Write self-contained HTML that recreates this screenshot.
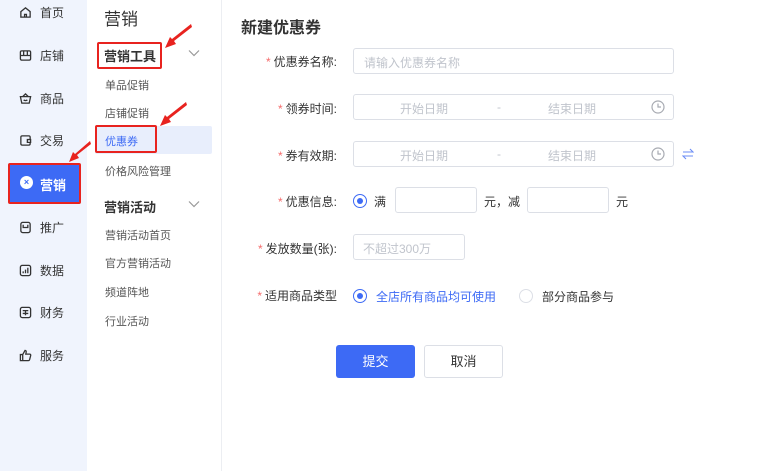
<!DOCTYPE html>
<html><head><meta charset="utf-8"><style>
*{margin:0;padding:0;box-sizing:border-box}
body{width:782px;height:471px;overflow:hidden;background:#fff;font-family:"Liberation Sans","Noto Sans CJK SC",sans-serif;position:relative;color:#333}
.a{position:absolute;white-space:nowrap}
#nav{position:absolute;left:0;top:0;width:87px;height:471px;background:#f0f4fd}
#sub{position:absolute;left:87px;top:0;width:135px;height:471px;background:#fff;border-right:1px solid #eceef2}
.ni{position:absolute;left:19px;font-size:12px;color:#333;display:flex;align-items:center;gap:8px}
.ni svg{width:13px;height:13px}
.si{position:absolute;left:105px;font-size:11px;color:#555}
.lab{position:absolute;font-size:12px;color:#333;text-align:right;right:445px}
.lab b{color:#f56c6c;font-weight:normal;margin-right:3px}
.inp{position:absolute;border:1px solid #dcdfe6;border-radius:3px;background:#fff;font-size:12px;color:#c0c4cc}
.ph{position:absolute;font-size:12px;color:#c0c4cc}
.radio{position:absolute;width:14px;height:14px;border-radius:50%;border:1px solid #3d6af5}
.radio.on::after{content:"";position:absolute;left:3px;top:3px;width:6px;height:6px;border-radius:50%;background:#3d6af5}
</style></head><body>
<div id="nav">
<div class="ni" style="top:4px"><svg viewBox="0 0 14 14" fill="none" stroke="#333" stroke-width="1.4"><path d="M2 6L7 2l5 4v6H2z"/><path d="M6 12V9h2v3"/></svg>首页</div>
<div class="ni" style="top:47px"><svg viewBox="0 0 14 14" fill="none" stroke="#333" stroke-width="1.4"><rect x="1.5" y="2" width="11" height="10" rx="1.5"/><path d="M5 2v5M9 2v5M1.5 7h11"/></svg>店铺</div>
<div class="ni" style="top:90px"><svg viewBox="0 0 14 14" fill="none" stroke="#333" stroke-width="1.4"><path d="M1.5 5h11l-1.5 7H3z"/><path d="M4 5l3-3 3 3M5 8.5c1 1 3 1 4 0"/></svg>商品</div>
<div class="ni" style="top:132px"><svg viewBox="0 0 14 14" fill="none" stroke="#333" stroke-width="1.4"><path d="M12 6V3.5A1.5 1.5 0 0 0 10.5 2h-7A1.5 1.5 0 0 0 2 3.5v7A1.5 1.5 0 0 0 3.5 12h7a1.5 1.5 0 0 0 1.5-1.5V9"/><path d="M9 6h3.5v3H9z"/></svg>交易</div>
<div class="a" style="left:8px;top:163px;width:73px;height:41px;background:#3d6af5;border:2px solid #e8231f;border-radius:2px"></div>
<div class="a" style="left:20px;top:176px;width:13px;height:13px;border-radius:50%;background:#fff;color:#3d6af5;font-size:9px;line-height:13px;text-align:center;font-weight:bold">×</div>
<div class="a" style="left:40px;top:175px;font-size:13px;color:#fff;font-weight:bold">营销</div>
<div class="ni" style="top:219px"><svg viewBox="0 0 14 14" fill="none" stroke="#333" stroke-width="1.4"><rect x="2" y="1.5" width="10" height="11" rx="2"/><path d="M4.5 4v3h5V4"/></svg>推广</div>
<div class="ni" style="top:262px"><svg viewBox="0 0 14 14" fill="none" stroke="#333" stroke-width="1.4"><rect x="1.5" y="1.5" width="11" height="11" rx="2"/><path d="M4.5 10V8M7 10V6M9.5 10V4"/></svg>数据</div>
<div class="ni" style="top:304px"><svg viewBox="0 0 14 14" fill="none" stroke="#333" stroke-width="1.4"><rect x="1.5" y="1.5" width="11" height="11" rx="2"/><path d="M4 5h6M4 8h6M7 5v5"/></svg>财务</div>
<div class="ni" style="top:347px"><svg viewBox="0 0 14 14" fill="none" stroke="#333" stroke-width="1.4"><path d="M1.5 6h2.5v6.5H1.5zM4 6l2.5-4.5c1 0 1.5 1 1.2 2L7.3 5.5h4.2c.8 0 1.3.7 1.1 1.5l-1.2 4.5c-.2.6-.7 1-1.3 1H4"/></svg>服务</div>
</div>
<div id="sub">
<div class="a" style="left:17px;top:5px;font-size:17px;color:#333">营销</div>
<div class="a" style="left:10px;top:42px;width:65px;height:27px;border:2px solid #e8231f;border-radius:2px"></div>
<div class="a" style="left:17px;top:46px;font-size:13px;font-weight:bold;color:#333">营销工具</div>
<svg class="a" style="left:101px;top:49px" width="12" height="8" viewBox="0 0 12 8"><path d="M1 1.5l5 5 5-5" fill="none" stroke="#999" stroke-width="1.2"/></svg>
<div class="a" style="left:8px;top:126px;width:117px;height:28px;background:#e8eefc;border-radius:2px"></div>
<div class="a" style="left:8px;top:125px;width:62px;height:28px;border:2px solid #e8231f;border-radius:2px"></div>
<div class="a" style="left:17px;top:197px;font-size:13px;font-weight:bold;color:#333">营销活动</div>
<svg class="a" style="left:101px;top:200px" width="12" height="8" viewBox="0 0 12 8"><path d="M1 1.5l5 5 5-5" fill="none" stroke="#999" stroke-width="1.2"/></svg>
</div>
<div class="si" style="top:77px">单品促销</div>
<div class="si" style="top:105px">店铺促销</div>
<div class="si" style="top:133px;color:#3d6af5">优惠券</div>
<div class="si" style="top:163px">价格风险管理</div>
<div class="si" style="top:227px">营销活动首页</div>
<div class="si" style="top:255px">官方营销活动</div>
<div class="si" style="top:284px">频道阵地</div>
<div class="si" style="top:313px">行业活动</div>

<div class="a" style="left:241px;top:14px;font-size:16px;font-weight:bold;color:#333">新建优惠券</div>
<div class="lab" style="top:53px"><b>*</b>优惠券名称:</div>
<div class="inp" style="left:353px;top:48px;width:321px;height:26px"><span style="position:absolute;left:10px;top:5px">请输入优惠券名称</span></div>
<div class="lab" style="top:100px"><b>*</b>领券时间:</div>
<div class="inp" style="left:353px;top:94px;width:321px;height:26px"></div>
<div class="ph" style="left:400px;top:100px">开始日期</div><div class="ph" style="left:497px;top:100px">-</div><div class="ph" style="left:548px;top:100px">结束日期</div>
<div class="lab" style="top:147px"><b>*</b>券有效期:</div>
<div class="inp" style="left:353px;top:141px;width:321px;height:26px"></div>
<div class="ph" style="left:400px;top:147px">开始日期</div><div class="ph" style="left:497px;top:147px">-</div><div class="ph" style="left:548px;top:147px">结束日期</div>
<svg class="a" style="left:651px;top:100px" width="14" height="14" viewBox="0 0 14 14"><circle cx="7" cy="7" r="6" fill="none" stroke="#a8abb2" stroke-width="1.2"/><path d="M7 3.5V7h3" fill="none" stroke="#a8abb2" stroke-width="1.2"/></svg>
<svg class="a" style="left:651px;top:147px" width="14" height="14" viewBox="0 0 14 14"><circle cx="7" cy="7" r="6" fill="none" stroke="#a8abb2" stroke-width="1.2"/><path d="M7 3.5V7h3" fill="none" stroke="#a8abb2" stroke-width="1.2"/></svg>
<svg class="a" style="left:682px;top:148px" width="12" height="12" viewBox="0 0 12 12"><path d="M1 4h10L8 1M11 8H1l3 3" fill="none" stroke="#6b8cf5" stroke-width="1.1"/></svg>
<div class="lab" style="top:193px"><b>*</b>优惠信息:</div>
<div class="radio on" style="left:353px;top:194px"></div>
<div class="a" style="left:374px;top:193px;font-size:12px">满</div>
<div class="inp" style="left:395px;top:187px;width:82px;height:26px"></div>
<div class="a" style="left:484px;top:193px;font-size:12px">元，减</div>
<div class="inp" style="left:527px;top:187px;width:82px;height:26px"></div>
<div class="a" style="left:616px;top:193px;font-size:12px">元</div>
<div class="lab" style="top:240px"><b>*</b>发放数量(张):</div>
<div class="inp" style="left:353px;top:234px;width:112px;height:26px"><span style="position:absolute;left:9px;top:5px">不超过300万</span></div>
<div class="lab" style="top:287px"><b>*</b>适用商品类型</div>
<div class="radio on" style="left:353px;top:289px"></div>
<div class="a" style="left:376px;top:288px;font-size:12px;color:#3d6af5">全店所有商品均可使用</div>
<div class="radio" style="left:519px;top:289px;border-color:#dcdfe6"></div>
<div class="a" style="left:542px;top:288px;font-size:12px">部分商品参与</div>
<div class="a" style="left:336px;top:345px;width:79px;height:33px;background:#3d6af5;border-radius:3px;color:#fff;font-size:13px;text-align:center;line-height:33px">提交</div>
<div class="a" style="left:424px;top:345px;width:79px;height:33px;border:1px solid #dcdfe6;border-radius:3px;color:#333;font-size:13px;text-align:center;line-height:31px">取消</div>

<svg class="a" style="left:0;top:0" width="782" height="471">
<g fill="#e8231f">
<polygon points="191,24 192,27 174,41 176,44 165,48 170,37 172,39"/>
<polygon points="186,102 187,105 169,119 171,122 160,126 165,115 167,117"/>
<polygon points="90,141 91,144 77,155 79,158 69,162 73,152 75,154"/>
</g></svg>
</body></html>
